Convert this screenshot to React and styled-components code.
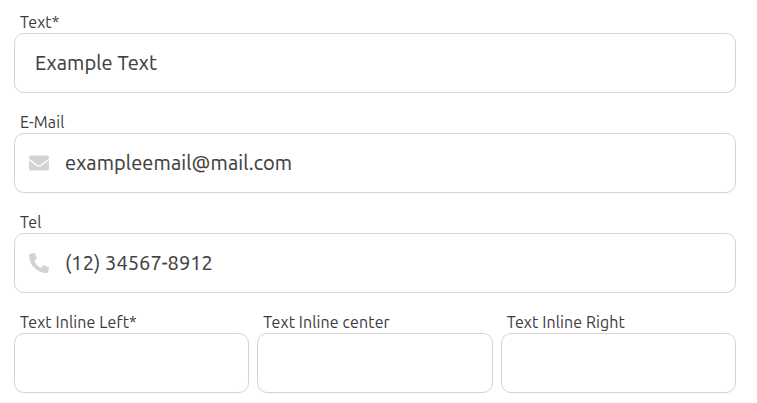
import React from "react";
import styled, { createGlobalStyle } from "styled-components";
import { FaEnvelope, FaPhoneAlt } from "react-icons/fa";

const GlobalStyle = createGlobalStyle`
  * { box-sizing: border-box; }
  body { margin: 0; background: #fff; font-family: Ubuntu, "Noto Sans", sans-serif; }
`;

const Form = styled.form`
  display: flex;
  flex-direction: column;
  gap: 18px;
  width: 736px;
  padding: 11px 0 0 14px;
`;

const Row = styled.div`
  display: grid;
  grid-template-columns: repeat(3, 1fr);
  gap: 8px;
`;

const Field = styled.div`
  display: flex;
  flex-direction: column;
  min-width: 0;
`;

const Label = styled.label`
  height: 22px;
  padding-left: 6px;
  font-size: 16px;
  line-height: 22px;
  letter-spacing: 0.11px;
  color: #40383e;
  white-space: nowrap;
`;

const Box = styled.div`
  display: flex;
  align-items: center;
  height: 60px;
  padding-left: ${(p) => (p.$icon ? 14 : 20)}px;
  border: 1px solid #d3d3d3;
  border-radius: 10px;
  color: #d3d3d3;

  svg { flex: none; margin-right: 16px; }
`;

const Value = styled.span`
  font-size: 20px;
  line-height: 28px;
  letter-spacing: ${(p) => p.$tracking}px;
  color: #404040;
  -webkit-text-stroke: 0.15px #404040;
  white-space: nowrap;
`;

function TextField({ label, value, icon, tracking = 0.11 }) {
  return (
    <Field>
      <Label>{label}</Label>
      <Box $icon={Boolean(icon)}>
        {icon}
        {value && <Value $tracking={tracking}>{value}</Value>}
      </Box>
    </Field>
  );
}

export default function App() {
  return (
    <>
      <GlobalStyle />
      <Form>
        <TextField label="Text*" value="Example Text" />
        <TextField label="E-Mail" value="exampleemail@mail.com" icon={<FaEnvelope size={20} />} />
        <TextField label="Tel" value="(12) 34567-8912" icon={<FaPhoneAlt size={20} />} tracking={0.06} />
        <Row>
          <TextField label="Text Inline Left*" />
          <TextField label="Text Inline center" />
          <TextField label="Text Inline Right" />
        </Row>
      </Form>
    </>
  );
}
